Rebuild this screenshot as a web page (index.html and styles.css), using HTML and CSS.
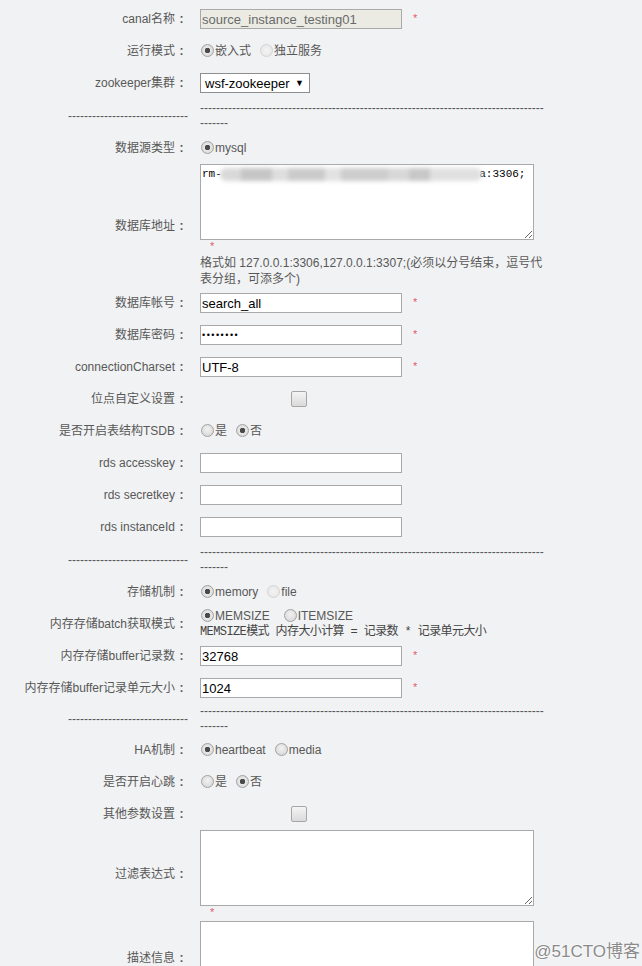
FILE: index.html
```html
<!doctype html>
<html>

<head>
    <meta charset="utf-8" />
    <title>canal instance</title>
    <link rel="stylesheet" href="styles.css">
</head>

<body>
    <div class="form">
        <div class="label">canal名称<span class="colon">:</span></div>
        <div class="field">
            <input class="text" type="text" value="source_instance_testing01" disabled>
            <span class="req">*</span>
        </div>

        <div class="label">运行模式<span class="colon">:</span></div>
        <div class="field">
            <label class="opt"><input class="radio" type="radio" name="mode" checked>嵌入式</label>
            <label class="opt"><input class="radio" type="radio" name="mode" disabled>独立服务</label>
        </div>

        <div class="label">zookeeper集群<span class="colon">:</span></div>
        <div class="field">
            <div class="select"><span>wsf-zookeeper</span><span class="arrow">▼</span></div>
        </div>

        <div class="label dash-label">------------------------------</div>
        <div class="dash">---------------------------------------------------------------------------------------------</div>

        <div class="label">数据源类型<span class="colon">:</span></div>
        <div class="field">
            <label class="opt"><input class="radio" type="radio" name="source" checked>mysql</label>
        </div>

        <div class="label">数据库地址<span class="colon">:</span></div>
        <div class="field field--stack">
            <div class="area-wrap">
                <textarea class="area">rm-                                       a:3306;</textarea>
                <span class="blur"></span>
            </div>
            <div class="req-line">*</div>
            <div class="hint">格式如 127.0.0.1:3306,127.0.0.1:3307;(必须以分号结束，逗号代表分组，可添多个)</div>
        </div>

        <div class="label">数据库帐号<span class="colon">:</span></div>
        <div class="field">
            <input class="text" type="text" value="search_all">
            <span class="req">*</span>
        </div>

        <div class="label">数据库密码<span class="colon">:</span></div>
        <div class="field">
            <input class="text pwd" type="text" value="••••••••">
            <span class="req">*</span>
        </div>

        <div class="label">connectionCharset<span class="colon">:</span></div>
        <div class="field">
            <input class="text" type="text" value="UTF-8">
            <span class="req">*</span>
        </div>

        <div class="label">位点自定义设置<span class="colon">:</span></div>
        <div class="field">
            <input class="check" type="checkbox">
        </div>

        <div class="label">是否开启表结构TSDB<span class="colon">:</span></div>
        <div class="field">
            <label class="opt"><input class="radio" type="radio" name="tsdb">是</label>
            <label class="opt"><input class="radio" type="radio" name="tsdb" checked>否</label>
        </div>

        <div class="label">rds accesskey<span class="colon">:</span></div>
        <div class="field"><input class="text" type="text"></div>

        <div class="label">rds secretkey<span class="colon">:</span></div>
        <div class="field"><input class="text" type="text"></div>

        <div class="label">rds instanceId<span class="colon">:</span></div>
        <div class="field"><input class="text" type="text"></div>

        <div class="label dash-label">------------------------------</div>
        <div class="dash">---------------------------------------------------------------------------------------------</div>

        <div class="label">存储机制<span class="colon">:</span></div>
        <div class="field">
            <label class="opt"><input class="radio" type="radio" name="store" checked>memory</label>
            <label class="opt"><input class="radio" type="radio" name="store" disabled>file</label>
        </div>

        <div class="label">内存存储batch获取模式<span class="colon">:</span></div>
        <div class="field field--stack">
            <div class="line">
                <label class="opt opt--wide"><input class="radio" type="radio" name="batch" checked>MEMSIZE</label>
                <label class="opt"><input class="radio" type="radio" name="batch">ITEMSIZE</label>
            </div>
            <div class="mono">MEMSIZE模式 内存大小计算 = 记录数 * 记录单元大小</div>
        </div>

        <div class="label">内存存储buffer记录数<span class="colon">:</span></div>
        <div class="field">
            <input class="text" type="text" value="32768">
            <span class="req">*</span>
        </div>

        <div class="label">内存存储buffer记录单元大小<span class="colon">:</span></div>
        <div class="field">
            <input class="text" type="text" value="1024">
            <span class="req">*</span>
        </div>

        <div class="label dash-label">------------------------------</div>
        <div class="dash dash--tight">---------------------------------------------------------------------------------------------</div>

        <div class="label">HA机制<span class="colon">:</span></div>
        <div class="field">
            <label class="opt"><input class="radio" type="radio" name="ha" checked>heartbeat</label>
            <label class="opt"><input class="radio" type="radio" name="ha">media</label>
        </div>

        <div class="label">是否开启心跳<span class="colon">:</span></div>
        <div class="field">
            <label class="opt"><input class="radio" type="radio" name="beat">是</label>
            <label class="opt"><input class="radio" type="radio" name="beat" checked>否</label>
        </div>

        <div class="label">其他参数设置<span class="colon">:</span></div>
        <div class="field">
            <input class="check" type="checkbox">
        </div>

        <div class="label">过滤表达式<span class="colon">:</span></div>
        <div class="field field--stack">
            <textarea class="area"></textarea>
            <div class="req-line">*</div>
        </div>

        <div class="label">描述信息<span class="colon">:</span></div>
        <div class="field field--stack field--gap">
            <textarea class="area"></textarea>
        </div>
    </div>

    <div class="watermark">@51CTO博客</div>
</body>

</html>
```

FILE: styles.css
```css
* {
    box-sizing: border-box;
}

html,
body {
    margin: 0;
    padding: 0;
    background: #f1f2f3;
    font-family: "Liberation Sans", "Noto Sans CJK SC", sans-serif;
    font-size: 12px;
    color: #585858;
}

.form {
    display: grid;
    grid-template-columns: 188px 345px;
    column-gap: 12px;
    padding-top: 3px;
}

.label {
    align-self: center;
    text-align: right;
    line-height: 16px;
    white-space: nowrap;
}

.colon {
    display: inline-block;
    width: 13px;
    text-align: center;
    font-weight: bold;
}

.field {
    min-height: 32px;
    display: flex;
    align-items: center;
}

.field--stack {
    display: block;
    min-height: 0;
}

.field--gap {
    padding-top: 3px;
}

.text {
    width: 202px;
    height: 20px;
    margin: 0;
    padding: 0 1px;
    border: 1px solid #a9a9a9;
    background: #fff;
    font: 13px "Liberation Sans", sans-serif;
    color: #000;
    outline: none;
}

.text:disabled {
    background: #ebebe4;
    color: #6a6a6a;
}

.pwd {
    font-size: 9px;
    letter-spacing: 1.5px;
}

.req {
    margin-left: 11px;
    margin-top: -3px;
    color: #e2586e;
    font-size: 11px;
}

.req-line {
    height: 12px;
    line-height: 12px;
    padding-left: 10px;
    color: #e2586e;
    font-size: 11px;
}

.opt {
    display: inline-flex;
    align-items: center;
    margin-right: 8px;
    line-height: 16px;
}

.opt--wide {
    margin-right: 13px;
}

.radio {
    appearance: none;
    -webkit-appearance: none;
    width: 13px;
    height: 13px;
    margin: 0 1px 2px 1px;
    border: 1px solid #a2a2a2;
    border-radius: 50%;
    background: radial-gradient(circle at 50% 40%, #f2f2f2, #d2d2d2);
}

.radio:checked {
    background: radial-gradient(circle, #4a4a4a 0 2.5px, #e8e8e8 3px, #d0d0d0);
}

.radio:disabled {
    border-color: #d4d4d4;
    background: radial-gradient(circle, #f4f4f4, #e4e4e4);
}

.check {
    appearance: none;
    -webkit-appearance: none;
    width: 16px;
    height: 16px;
    margin: 0 0 0 91px;
    border: 1px solid #a6a6a6;
    border-radius: 2px;
    background: linear-gradient(#f4f4f4, #dadada);
}

.select {
    width: 110px;
    height: 20px;
    padding: 0 5px 0 4px;
    display: flex;
    align-items: center;
    justify-content: space-between;
    border: 1px solid #8e8e8e;
    background: #fff;
    font-size: 13px;
    color: #000;
}

.select .arrow {
    font-size: 9px;
}

.dash-label {
    color: #585858;
}

.dash {
    padding: 2px 0 1px;
    line-height: 15px;
    word-break: break-all;
    color: #585858;
}

.dash--tight {
    padding: 0;
}

.area-wrap {
    position: relative;
}

.area {
    display: block;
    width: 334px;
    height: 76px;
    margin: 0;
    padding: 3px 1px;
    border: 1px solid #a9a9a9;
    background: #fff;
    font: 11px "Liberation Mono", monospace;
    color: #000;
    white-space: pre;
    overflow: hidden;
    outline: none;
}

.blur {
    position: absolute;
    left: 20px;
    top: 4px;
    width: 262px;
    height: 13px;
    border-radius: 6px;
    filter: blur(2px);
    background: linear-gradient(90deg, #d9d9d9 0 8%, #c6c6c6 8% 20%, #dedede 20% 26%, #cbcbcb 26% 40%, #e2e2e2 40% 46%, #cdcdcd 46% 64%, #d8d8d8 64% 72%, #c8c8c8 72% 80%, #e0e0e0 80% 100%);
}

.hint {
    margin-top: 3px;
    line-height: 16px;
}

.line {
    height: 16px;
    display: flex;
    align-items: center;
}

.mono {
    height: 16px;
    line-height: 16px;
    font-family: "Liberation Mono", "Noto Sans CJK SC", monospace;
    font-size: 12px;
    letter-spacing: -0.6px;
    color: #444;
    white-space: nowrap;
}

.watermark {
    position: absolute;
    top: 937px;
    right: 2px;
    font-size: 17px;
    color: #8a8a8a;
    text-shadow: 0 0 2px #fff, 0 0 2px #fff;
}
```
